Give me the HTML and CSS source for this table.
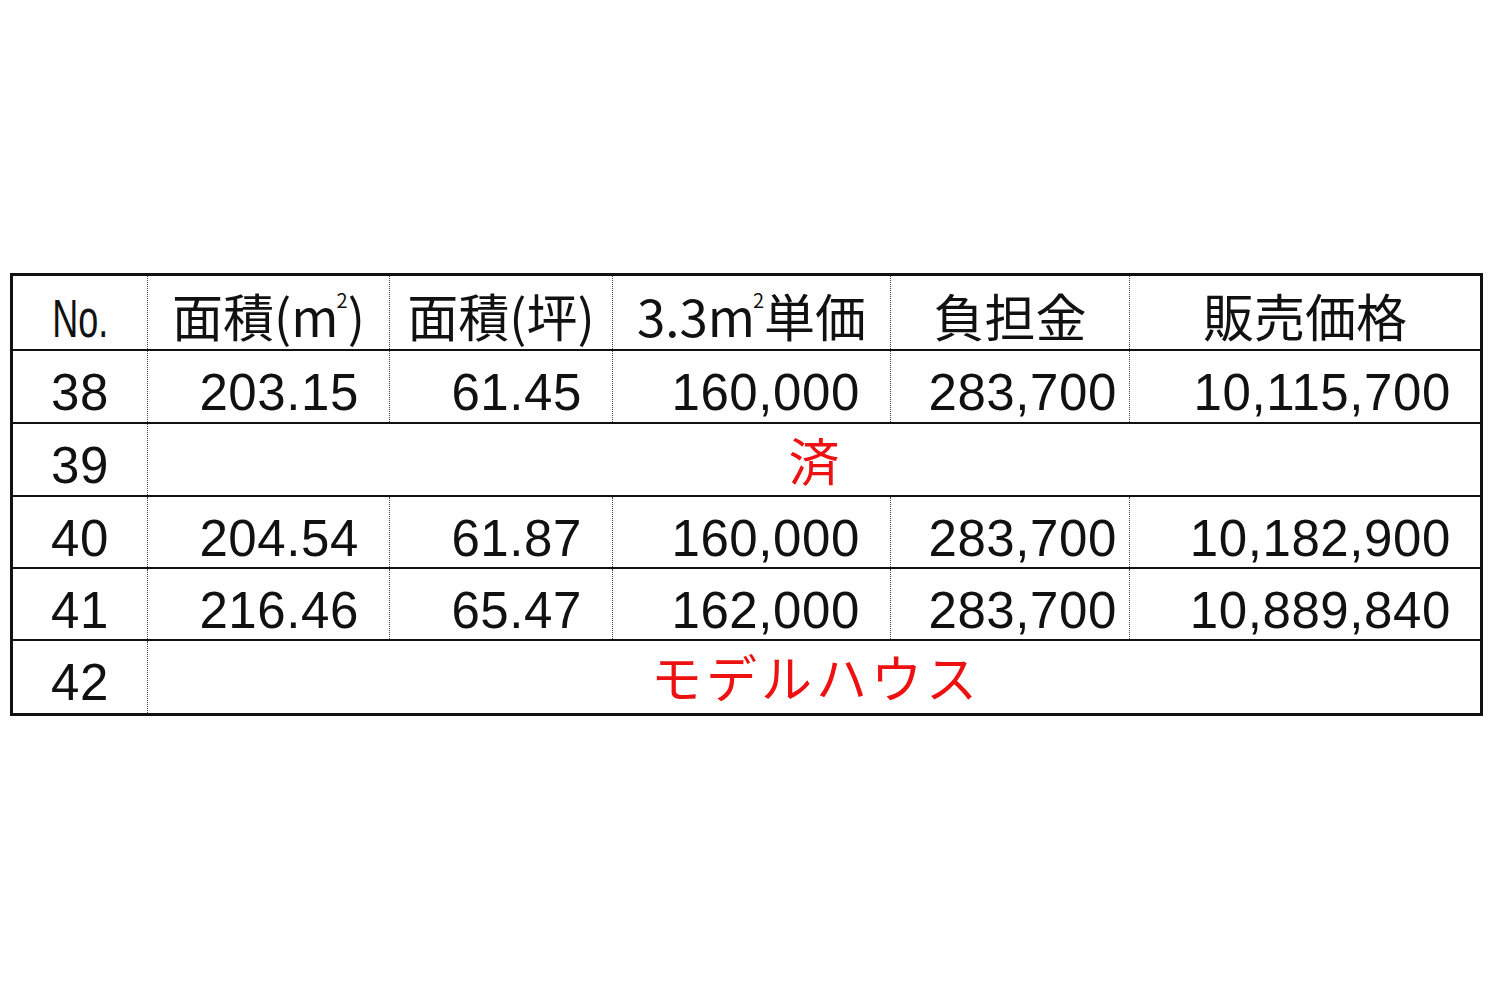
FILE: index.html
```html
<!DOCTYPE html>
<html lang="ja">
<head>
<meta charset="utf-8">
<title>販売価格表</title>
<link rel="stylesheet" href="styles.css">
</head>
<body>
<div class="page">
  <table class="price">
    <colgroup>
      <col class="c-no">
      <col class="c-m2">
      <col class="c-tsubo">
      <col class="c-unit">
      <col class="c-fee">
      <col class="c-total">
    </colgroup>
    <thead>
      <tr class="head">
        <th><span class="no">No.</span></th>
        <th>面積(m<span class="sq">2</span>)</th>
        <th>面積(坪)</th>
        <th>3.3m<span class="sq">2</span>単価</th>
        <th>負担金</th>
        <th>販売価格</th>
      </tr>
    </thead>
    <tbody>
      <tr class="r1">
        <td class="id">38</td>
        <td class="num p-m2">203.15</td>
        <td class="num p-tsubo">61.45</td>
        <td class="num p-unit">160,000</td>
        <td class="num p-fee">283,700</td>
        <td class="num p-total">10,115,700</td>
      </tr>
      <tr class="r2">
        <td class="id">39</td>
        <td class="note" colspan="5">済</td>
      </tr>
      <tr class="r3">
        <td class="id">40</td>
        <td class="num p-m2">204.54</td>
        <td class="num p-tsubo">61.87</td>
        <td class="num p-unit">160,000</td>
        <td class="num p-fee">283,700</td>
        <td class="num p-total">10,182,900</td>
      </tr>
      <tr class="r4">
        <td class="id">41</td>
        <td class="num p-m2">216.46</td>
        <td class="num p-tsubo">65.47</td>
        <td class="num p-unit">162,000</td>
        <td class="num p-fee">283,700</td>
        <td class="num p-total">10,889,840</td>
      </tr>
      <tr class="r5">
        <td class="id">42</td>
        <td class="note wide" colspan="5">モデルハウス</td>
      </tr>
    </tbody>
  </table>
</div>
</body>
</html>
```

FILE: styles.css
```css
html, body {
  margin: 0;
  padding: 0;
  background: #ffffff;
}

.page {
  padding: 273px 0 0 10px;
}

.price {
  border-collapse: collapse;
  table-layout: fixed;
  width: 1473px;
  border: 3px solid #111111;
  color: #111111;
}

.c-no { width: 136px; }
.c-m2 { width: 242px; }
.c-tsubo { width: 223px; }
.c-unit { width: 278px; }
.c-fee { width: 239px; }
.c-total { width: 352px; }

.price th,
.price td {
  padding: 0;
  border-left: 1px dotted #444444;
  border-top: 2px solid #111111;
  vertical-align: top;
  white-space: nowrap;
  overflow: visible;
}

.price th:first-child,
.price td:first-child {
  border-left: 3px solid #111111;
}

.head {
  height: 74px;
}

.price th {
  font-family: "Noto Sans CJK JP", sans-serif;
  font-weight: normal;
  font-size: 51px;
  line-height: 60px;
  padding-top: 9px;
  text-align: center;
}

.no {
  display: inline-block;
  font-family: "Liberation Sans", Arial, sans-serif;
  font-size: 53px;
  transform: scaleX(0.68);
}

.sq {
  font-size: 20px;
  vertical-align: top;
  line-height: 30px;
  margin-left: -2px;
}

.r1, .r2 { height: 73px; }
.r3, .r4 { height: 72px; }
.r5 { height: 74px; }

.price td {
  font-family: "Liberation Sans", Arial, sans-serif;
  font-size: 51px;
  line-height: 57px;
  padding-top: 13px;
  letter-spacing: 0.6px;
}

.price td.id {
  text-align: center;
}

.price td.num {
  text-align: right;
}

.price td.p-m2 { padding-right: 30px; }
.price td.p-tsubo { padding-right: 30px; }
.price td.p-unit { padding-right: 30px; }
.price td.p-fee { padding-right: 12px; }
.price td.p-total { padding-right: 29px; }

.price td.note {
  font-family: "Noto Sans CJK JP", sans-serif;
  color: #ee1111;
  text-align: center;
  font-size: 51px;
  line-height: 60px;
  padding-top: 5px;
  letter-spacing: 0;
}

.price td.wide {
  letter-spacing: 4px;
  text-indent: 4px;
}
```
